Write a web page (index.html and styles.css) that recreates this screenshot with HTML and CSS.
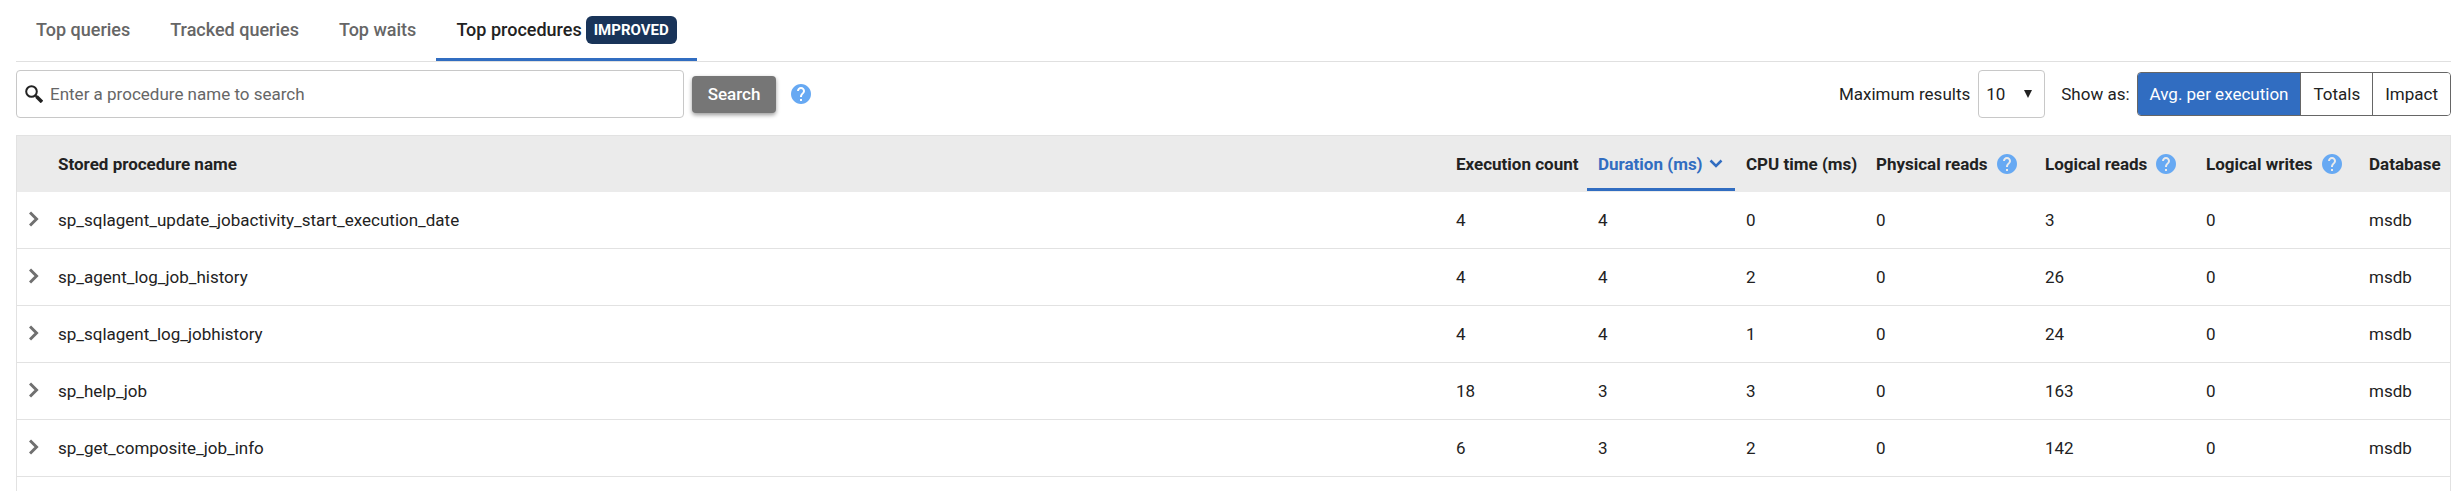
FILE: index.html
```html
<!DOCTYPE html>
<html lang="en">
<head>
<meta charset="utf-8">
<title>Top procedures</title>
<link rel="stylesheet" href="styles.css">
</head>
<body>
<svg class="sprite" aria-hidden="true">
  <symbol id="help" viewBox="2 2 20 20">
    <path fill="currentColor" d="M12 2C6.48 2 2 6.48 2 12s4.480 10 10 10 10-4.480 10-10S17.520 2 12 2z"/>
    <path fill="var(--mark)" d="M13 19h-2v-2h2v2zm2.070-7.750l-.9.920C13.450 12.900 13 13.500 13 15h-2v-.5c0-1.100.45-2.100 1.170-2.830l1.240-1.260c.37-.36.59-.86.59-1.410 0-1.100-.9-2-2-2s-2 .9-2 2H8c0-2.210 1.790-4 4-4s4 1.790 4 4c0 .88-.36 1.680-.93 2.250z"/>
  </symbol>
  <symbol id="chevron" viewBox="0 0 10 16">
    <path d="M1 1.500L7.500 8L1 14.500" fill="none" stroke="currentColor" stroke-width="3"/>
  </symbol>
</svg>

<nav class="tabs">
  <a class="tab" href="#queries">Top queries</a>
  <a class="tab" href="#tracked">Tracked queries</a>
  <a class="tab" href="#waits">Top waits</a>
  <a class="tab tab-active" href="#procedures" aria-current="page">Top procedures <span class="badge">IMPROVED</span></a>
</nav>

<div class="toolbar">
  <form class="search">
    <label class="search-box">
      <svg class="search-icon" viewBox="0 0 18 18" aria-hidden="true"><circle cx="6.500" cy="6.500" r="5.300" fill="none" stroke="currentColor" stroke-width="2"/><path d="M10 10L12 12" stroke="currentColor" stroke-width="2"/><path d="M11.500 11.500L17 17" stroke="currentColor" stroke-width="3.500"/></svg>
      <input class="search-input" type="text" aria-label="Procedure name" placeholder="Enter a procedure name to search">
    </label>
    <button class="search-button" type="button">Search</button>
    <svg class="help" role="img" aria-label="Help"><use href="#help"/></svg>
  </form>
  <div class="options">
    <label for="max">Maximum results</label>
    <div class="select-box">
      <select class="select" id="max"><option>10</option><option>20</option><option>50</option></select>
      <svg class="select-arrow" viewBox="0 0 8 8" aria-hidden="true"><path d="M0 0H8L4 8z" fill="currentColor"/></svg>
    </div>
    <span class="show-label" id="show">Show as:</span>
    <div class="segments" role="group" aria-labelledby="show">
      <button class="segment segment-active" type="button" aria-pressed="true">Avg. per execution</button>
      <button class="segment" type="button">Totals</button>
      <button class="segment" type="button">Impact</button>
    </div>
  </div>
</div>

<main class="results">
  <table class="grid">
    <colgroup><col class="col-expand"><col><col class="col-count"><col class="col-duration"><col class="col-cpu"><col class="col-physical"><col class="col-reads"><col class="col-writes"><col class="col-database"></colgroup>
    <thead>
      <tr>
        <td></td>
        <th>Stored procedure name</th>
        <th>Execution count</th>
        <th class="sorted" aria-sort="descending"><span class="heading">Duration (ms)<svg class="sort" viewBox="0 0 14 10" aria-hidden="true"><path d="M1.500 1.500L7 7L12.500 1.500" fill="none" stroke="currentColor" stroke-width="2.500"/></svg></span></th>
        <th>CPU time (ms)</th>
        <th><span class="heading heading-help">Physical reads<svg class="help" role="img" aria-label="Help"><use href="#help"/></svg></span></th>
        <th><span class="heading heading-help">Logical reads<svg class="help" role="img" aria-label="Help"><use href="#help"/></svg></span></th>
        <th><span class="heading heading-help">Logical writes<svg class="help" role="img" aria-label="Help"><use href="#help"/></svg></span></th>
        <th>Database</th>
      </tr>
    </thead>
    <tbody>
      <tr><td class="expand"><button class="expander" type="button" aria-label="Expand"><svg class="chevron"><use href="#chevron"/></svg></button></td><td>sp_sqlagent_update_jobactivity_start_execution_date</td><td>4</td><td>4</td><td>0</td><td>0</td><td>3</td><td>0</td><td>msdb</td></tr>
      <tr><td class="expand"><button class="expander" type="button" aria-label="Expand"><svg class="chevron"><use href="#chevron"/></svg></button></td><td>sp_agent_log_job_history</td><td>4</td><td>4</td><td>2</td><td>0</td><td>26</td><td>0</td><td>msdb</td></tr>
      <tr><td class="expand"><button class="expander" type="button" aria-label="Expand"><svg class="chevron"><use href="#chevron"/></svg></button></td><td>sp_sqlagent_log_jobhistory</td><td>4</td><td>4</td><td>1</td><td>0</td><td>24</td><td>0</td><td>msdb</td></tr>
      <tr><td class="expand"><button class="expander" type="button" aria-label="Expand"><svg class="chevron"><use href="#chevron"/></svg></button></td><td>sp_help_job</td><td>18</td><td>3</td><td>3</td><td>0</td><td>163</td><td>0</td><td>msdb</td></tr>
      <tr><td class="expand"><button class="expander" type="button" aria-label="Expand"><svg class="chevron"><use href="#chevron"/></svg></button></td><td>sp_get_composite_job_info</td><td>6</td><td>3</td><td>2</td><td>0</td><td>142</td><td>0</td><td>msdb</td></tr>
    </tbody>
  </table>
</main>
</body>
</html>
```

FILE: styles.css
```css
* { box-sizing: border-box; }

body {
  --blue: #316dc1;
  display: flex;
  flex-direction: column;
  min-height: 100vh;
  margin: 0;
  padding: 0 10px 0 16px;
  background: #fff;
  color: #222;
  font: 17px/24px Roboto, sans-serif;
}

button, input, select { font: inherit; color: inherit; }

.sprite { position: absolute; width: 0; height: 0; }

.tabs {
  display: flex;
  height: 62px;
  border-bottom: 1px solid #e0e0e0;
}

.tab {
  display: flex;
  align-items: center;
  gap: 4px;
  padding: 2px 20px 0;
  border-bottom: 3px solid transparent;
  color: #666;
  font-size: 18px;
  font-weight: 500;
  text-decoration: none;
}

.tab-active { border-bottom-color: var(--blue); color: #222; }

.badge {
  padding: 2px 8px;
  border-radius: 6px;
  background: #193459;
  color: #fff;
  font-size: 15px;
  font-weight: 700;
}

.toolbar {
  display: flex;
  justify-content: space-between;
  align-items: center;
  padding: 8px 0 17px;
}

.search, .options { display: flex; align-items: center; }

.search-box {
  display: flex;
  align-items: center;
  gap: 7px;
  width: 668px;
  height: 48px;
  padding: 0 8px;
  border: 1px solid #c8c8c8;
  border-radius: 4px;
}

.search-icon { width: 18px; height: 18px; }

.search-input {
  flex: 1;
  padding: 0;
  border: 0;
  outline: 0;
  background: none;
}

.search-input::placeholder { color: #666; opacity: 1; }

.search-button {
  width: 84px;
  height: 37px;
  margin: 0 15px 0 8px;
  padding: 0;
  border: 0;
  border-radius: 4px;
  background: #767676;
  box-shadow: 0 2px 4px rgba(0, 0, 0, .4);
  color: #fff;
  font-weight: 500;
}

.help { --mark: #fff; width: 20px; height: 20px; color: #67a9f3; }

.select-box { display: grid; align-items: center; margin: 0 16px 0 8px; }

.select {
  grid-area: 1 / 1;
  width: 67px;
  height: 48px;
  padding: 0 7px;
  border: 1px solid #c8c8c8;
  border-radius: 4px;
  background: #fff;
  appearance: none;
}

.select-arrow {
  grid-area: 1 / 1;
  justify-self: end;
  width: 8px;
  height: 8px;
  margin-right: 13px;
  pointer-events: none;
}

.show-label { margin-right: 7px; }

.segments {
  display: flex;
  height: 44px;
  overflow: hidden;
  border: 1px solid #666;
  border-radius: 4px;
}

.segment {
  padding: 0 12px;
  border: 0;
  background: #fff;
}

.segment + .segment { border-left: 1px solid #666; }

.segment-active { background: var(--blue); color: #fff; }

.results {
  flex: 1;
  border: 1px solid #e2e2e2;
  border-bottom: 0;
}

.grid {
  width: 100%;
  table-layout: fixed;
  border-collapse: separate;
  border-spacing: 0;
}

.col-expand { width: 30px; }
.col-count { width: 142px; }
.col-duration { width: 148px; }
.col-cpu { width: 130px; }
.col-physical { width: 169px; }
.col-reads { width: 161px; }
.col-writes { width: 163px; }
.col-database { width: 92px; }

.grid th, .grid td {
  height: 57px;
  padding: 0 0 0 11px;
  border-bottom: 1px solid #e2e2e2;
  text-align: left;
  white-space: nowrap;
}

.grid thead th, .grid thead td {
  height: 56px;
  border-bottom-color: #ebebeb;
  background: #ebebeb;
}

.grid .expand { padding: 0 0 2px 12px; }

.grid thead .help { --mark: #ebebeb; }

.grid thead .sorted { color: var(--blue); box-shadow: inset 0 -3px var(--blue); }

.heading { display: flex; align-items: center; gap: 6px; }
.heading-help { gap: 9px; }
.sort { width: 14px; height: 10px; }

.expander {
  display: block;
  padding: 0;
  border: 0;
  background: none;
  color: #707070;
}

.chevron { display: block; width: 10px; height: 16px; }
```
